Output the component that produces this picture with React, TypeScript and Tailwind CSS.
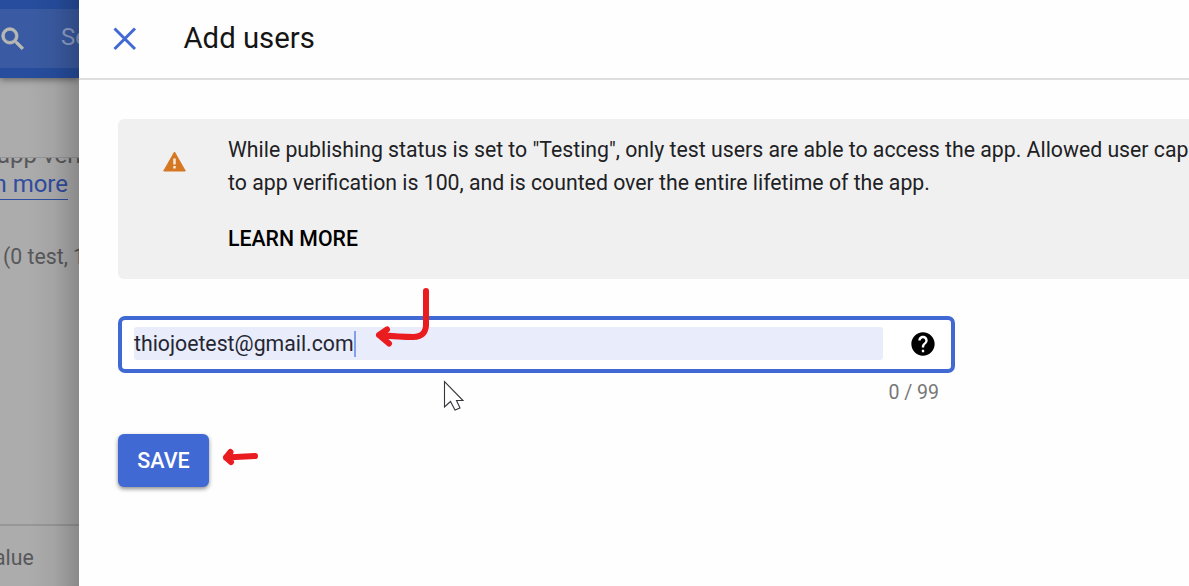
import { ReactNode } from 'react';

function SearchIcon() {
  return (
    <svg width="30" height="30" viewBox="0 0 24 24" fill="#b9b9b4" stroke="#b9b9b4" strokeWidth="0.7" className="-ml-[2px] shrink-0">
      <path d="M15.5 14h-.79l-.28-.27A6.471 6.471 0 0 0 16 9.5 6.5 6.5 0 1 0 9.5 16c1.61 0 3.09-.59 4.23-1.57l.27.28v.79l5 4.99L20.49 19l-4.99-5zm-6 0C7.01 14 5 11.99 5 9.5S7.01 5 9.5 5 14 7.01 14 9.5 11.99 14 9.5 14z" />
    </svg>
  );
}

function Backdrop() {
  return (
    <aside className="relative flex h-full w-[79px] shrink-0 flex-col overflow-hidden whitespace-nowrap bg-[#acacac] text-[21.25px] text-[#58585b]">
      <div className="z-10 flex h-[78px] shrink-0 flex-col bg-[#264d9e] pt-[9px] shadow-[0_1px_7px_rgba(0,0,0,0.5)]">
        <div className="flex h-[59px] items-center bg-[#3a5ba3]">
          <SearchIcon />
          <span className="-mt-[4px] ml-[33px] text-[24px] leading-none text-[#8fa0c8]">Search</span>
        </div>
      </div>
      <div className="h-[80px] shrink-0 border-b border-[#969696]" />
      <div className="flex h-[10px] shrink-0 items-end overflow-hidden">
        <span className="-ml-[3px] text-[24px] leading-[25px]">app verification</span>
      </div>
      <div className="flex h-[32px] shrink-0 justify-end pr-[11px]">
        <a className="border-b border-[#304d9f] text-[24px] leading-[33px] text-[#304d9f]">Learn more</a>
      </div>
      <div className="mt-[42px] shrink-0 pl-[3px] leading-[30px]">(0 test, 1 other)</div>
      <div className="mt-auto flex h-[62px] shrink-0 border-t-2 border-[#979797] pt-[17px]">
        <span className="-ml-[19px] leading-[30px]">Value</span>
      </div>
      <div className="absolute inset-y-0 right-0 z-20 w-[50px] bg-linear-to-r from-transparent via-black/5 to-black/20" />
    </aside>
  );
}

function Notice({ children }: { children: ReactNode }) {
  return (
    <section className="flex h-[160px] w-[1200px] shrink-0 rounded-[6px] bg-[#f0f0f0] pl-[45px] pt-[14px] text-[#202124]">
      <svg width="23" height="21" viewBox="0 0 23 21" className="mt-[18px] shrink-0">
        <path d="M11.5 1 22.3 20H.7Z" fill="#d67722" stroke="#d67722" strokeWidth="1" strokeLinejoin="round" />
        <path d="M11.5 7.5v6M11.5 15v2.5" stroke="#f7efe6" strokeWidth="2.4" />
      </svg>
      <div className="ml-[42px] whitespace-nowrap text-[21.25px] leading-[33px]">
        {children}
      </div>
    </section>
  );
}

function EmailField() {
  return (
    <div className="flex h-[57px] w-[837px] shrink-0 items-center rounded-[7px] border-4 border-[#4169d3] bg-white pl-[12px]">
      <div className="-mt-[2px] flex h-[33px] w-[749px] items-center rounded-[3px] bg-[#e8ecfb] text-[21.25px] text-[#252631]">
        <span>thiojoetest@gmail.com</span>
        <span className="h-[26px] w-[2px] bg-[#83a1ea]" />
      </div>
      <svg width="28" height="28" viewBox="0 0 24 24" className="-mt-px ml-[26px]">
        <path d="M12 2C6.48 2 2 6.48 2 12s4.48 10 10 10 10-4.48 10-10S17.52 2 12 2zm1 17h-2v-2h2v2zm2.07-7.75l-.9.92C13.45 12.9 13 13.5 13 15h-2v-.5c0-1.1.45-2.1 1.17-2.83l1.24-1.26c.37-.36.59-.86.59-1.41 0-1.1-.9-2-2-2s-2 .9-2 2H8c0-2.21 1.79-4 4-4s4 1.79 4 4c0 .88-.36 1.68-.93 2.25z" />
      </svg>
    </div>
  );
}

function Annotations() {
  return (
    <svg className="pointer-events-none absolute inset-0 z-30" width="1189" height="586" viewBox="0 0 1189 586" fill="none">
      <g stroke="#e91c1f" strokeWidth="6" strokeLinecap="round" strokeLinejoin="round">
        <path d="M426 291V322Q427 337 413 337Q401 337 379 335M387 329.5 379 335 389 343.5" />
        <path d="M255 456 226 457.5M230.500 452 226 457.500 231 462" />
      </g>
      <path d="M444.500 381.500V407L450.500 401.500 455 410 460 408 456.500 400.500H463Z" fill="#fff" stroke="#36363d" strokeWidth="1.1" />
    </svg>
  );
}

export default function App() {
  return (
    <div className="relative flex h-[586px] w-[1189px] overflow-hidden bg-[#fefefe] font-['Roboto',sans-serif]">
      <Backdrop />
      <main className="flex min-w-0 flex-1 flex-col overflow-hidden">
        <header className="flex h-[80px] shrink-0 items-center border-b-2 border-[#dedede] pl-[34px]">
          <svg width="24" height="24" viewBox="0 0 24 24" stroke="#4169d3" strokeWidth="3">
            <path d="M1.500 1.500 22 22M22 1.500 1.500 22" />
          </svg>
          <h1 className="-mt-px ml-[46.5px] text-[29.3px] leading-none text-[#151515]">Add users</h1>
        </header>
        <div className="flex flex-col items-start pl-[39px] pt-[39px]">
          <Notice>
            <p>While publishing status is set to "Testing", only test users are able to access the app. Allowed user cap prior</p>
            <p>to app verification is 100, and is counted over the entire lifetime of the app.</p>
            <p className="mt-[23px] font-medium text-black">LEARN MORE</p>
          </Notice>
          <div className="mt-[37px] flex flex-col">
            <EmailField />
            <div className="mt-[7px] self-end pr-[16px] text-[19.5px] leading-[26px] text-[#777]">0 / 99</div>
          </div>
          <button className="mt-[28px] h-[53px] w-[91px] rounded-[6px] bg-[#4169d3] pt-[2px] text-[21.5px] font-medium text-white shadow-[0_2px_4px_rgba(0,0,0,0.45)]">SAVE</button>
        </div>
      </main>
      <Annotations />
    </div>
  );
}
